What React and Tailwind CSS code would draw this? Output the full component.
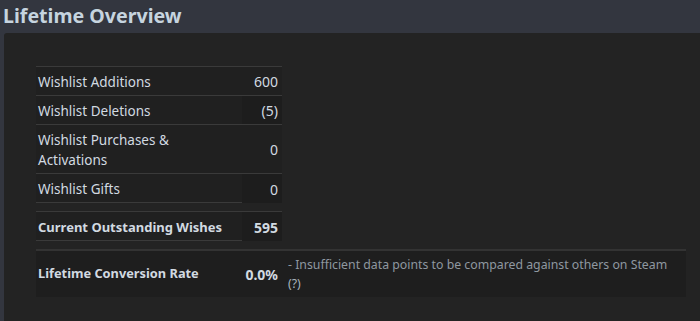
import React from "react";

const font = { fontFamily: '"Noto Sans", Arial, sans-serif' };

function Row({ label, value, bold, valueDark, labelBottom }) {
  return (
    <div className="flex border-t border-[#3a3a3a]">
      <div
        className={`w-[206px] pl-[2px] pt-[5px] pb-[3px] leading-[20px] text-[#d2dae1] ${bold ? "text-[13px] font-bold" : "text-[13.5px]"} ${labelBottom ? "border-b border-[#3a3a3a]" : ""}`}
      >
        {label}
      </div>
      <div
        className={`flex w-[40px] items-center justify-end pr-[4px] pt-[1px] text-[14px] text-[#d2dae1] ${bold ? "font-bold" : ""} ${valueDark ? "bg-[#1d1d1d]" : ""}`}
      >
        {value}
      </div>
    </div>
  );
}

export default function App() {
  return (
    <div className="flex h-[321px] w-[700px] flex-col overflow-hidden bg-[#33363f]" style={font}>
      <h1 className="h-[33px] pl-[3px] pt-[1px] text-[19.6px] font-bold leading-[30px] text-[#c6d4df]">
        Lifetime Overview
      </h1>
      <div className="ml-[4px] flex-1 rounded-tl-[3px] bg-[#232323] pl-[32px] pt-[33px] pr-[14px]">
        <div className="w-[246px] bg-[#202020]">
          <Row label="Wishlist Additions" value="600" />
          <Row label="Wishlist Deletions" value="(5)" valueDark />
          <Row label={<>Wishlist Purchases &amp;<br />Activations</>} value="0" />
          <Row label="Wishlist Gifts" value="0" valueDark labelBottom />
        </div>
        <div className="mt-[8px] w-[246px] bg-[#202020]">
          <Row label="Current Outstanding Wishes" value="595" bold valueDark labelBottom />
        </div>
        <div className="mt-[8px] flex h-[48px] border-t-2 border-[#333333] bg-[#1e1e1e]">
          <div className="flex w-[206px] items-center pl-[2px] text-[12.8px] font-bold text-[#d2dae1]">
            Lifetime Conversion Rate
          </div>
          <div className="flex w-[40px] items-center justify-end pr-[4px] text-[14px] font-bold text-[#d2dae1]">
            0.0%
          </div>
          <div className="flex-1 pl-[6px] pt-[4px] text-[12.3px] leading-[19px] text-[#8f98a0]">
            - Insufficient data points to be compared against others on Steam
            <br />
            <span className="text-[#a8b3bc]">(?)</span>
          </div>
        </div>
      </div>
    </div>
  );
}
